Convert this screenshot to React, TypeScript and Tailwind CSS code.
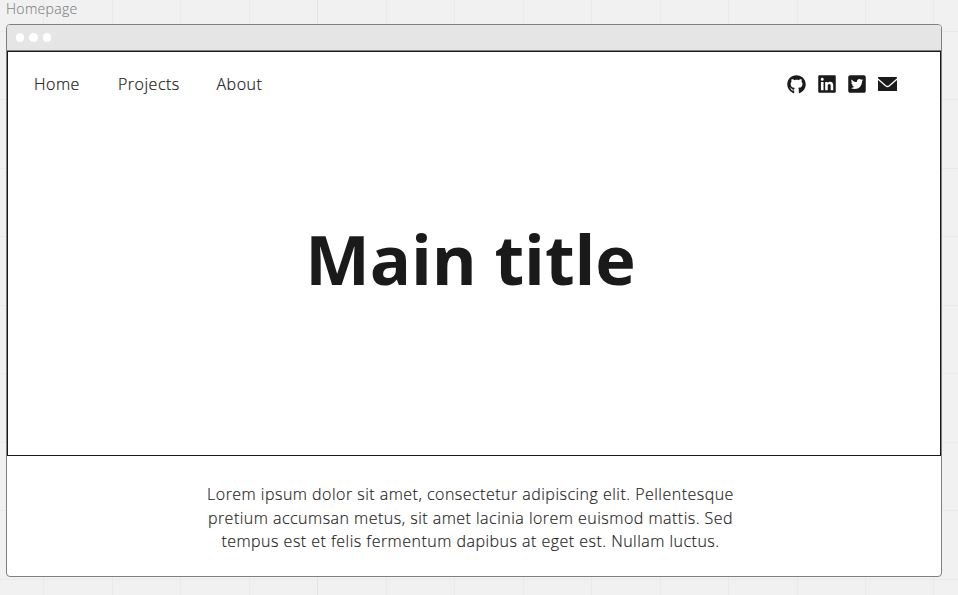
import { FaGithub, FaLinkedin, FaTwitterSquare } from "react-icons/fa";

const verticals = [43, 112, 180, 249, 317, 386, 454, 523, 591, 660, 728, 797, 865, 933];
const horizontals = [31, 99, 168, 236, 305, 373, 442, 510, 579];

function CanvasGrid() {
  return (
    <svg className="absolute inset-0 h-full w-full" shapeRendering="crispEdges" aria-hidden="true">
      {verticals.map((x) => (
        <rect key={x} x={x} y="0" width="1" height="595" fill={x === 317 ? "#e3e3e3" : "#eaeaea"} />
      ))}
      {horizontals.map((y) => (
        <rect key={y} x="0" y={y} width="958" height="1" fill="#eaeaea" />
      ))}
    </svg>
  );
}

function Envelope() {
  return (
    <svg className="h-[14px] w-[19px]" viewBox="0 0 19 14" aria-hidden="true">
      <rect width="19" height="14" rx="0.5" fill="currentColor" />
      <path d="M-0.5 1.6 L7.6 8.8 Q9.5 10.2 11.4 8.8 L19.5 1.6" fill="none" stroke="#fff" strokeWidth="1.3" />
    </svg>
  );
}

function TitleBar() {
  return (
    <div className="flex h-[25px] items-center gap-[5px] rounded-t-[3px] bg-[#e5e5e5] pl-[8.5px]">
      <span className="size-[8.5px] rounded-full bg-white" />
      <span className="size-[8.5px] rounded-full bg-white" />
      <span className="size-[8.5px] rounded-full bg-white" />
    </div>
  );
}

function Header() {
  return (
    <header className="flex h-[64px] items-center justify-between pr-[43px] pl-[26px]">
      <nav className="flex text-[16px] font-light tracking-[0.5px] [-webkit-text-stroke:0.2px_#1a1a1a]">
        <a className="w-[84px]">Home</a>
        <a className="w-[98.5px]">Projects</a>
        <a>About</a>
      </nav>
      <div className="flex items-center">
        <FaGithub className="mr-[11px] size-[19px]" />
        <FaLinkedin className="mr-[10px] size-[20px]" />
        <FaTwitterSquare className="mr-[11.5px] size-[20px]" />
        <Envelope />
      </div>
    </header>
  );
}

export default function App() {
  return (
    <div className="relative h-[595px] w-[958px] overflow-hidden bg-[#f1f1f1] font-['Open_Sans','Noto_Sans',sans-serif] text-[#1a1a1a]">
      <CanvasGrid />
      <div className="relative flex flex-col pl-[6px]">
        <div className="h-6 text-[14px] leading-[18px] font-light tracking-[0.3px] text-[#808080] [-webkit-text-stroke:0.1px_#808080]">
          Homepage
        </div>
        <main className="h-[553px] w-[936px] rounded-[4px] border border-[#808080] bg-white">
          <TitleBar />
          <div className="-mx-px border-x border-t border-[#808080]">
            <section className="h-[405px] border border-[#1a1a1a]">
              <Header />
              <h1 className="mt-[96px] -ml-[7px] text-center text-[68.5px] leading-[94px] font-bold tracking-[-0.1px]">Main title</h1>
            </section>
          </div>
          <p className="mt-[27px] -ml-[7px] text-center text-[16px] leading-[23.5px] font-light tracking-[0.48px] [-webkit-text-stroke:0.15px_#1a1a1a]">
            Lorem ipsum dolor sit amet, consectetur adipiscing elit. Pellentesque
            <br />
            pretium accumsan metus, sit amet lacinia lorem euismod mattis. Sed
            <br />
            tempus est et felis fermentum dapibus at eget est. Nullam luctus.
          </p>
        </main>
      </div>
    </div>
  );
}
